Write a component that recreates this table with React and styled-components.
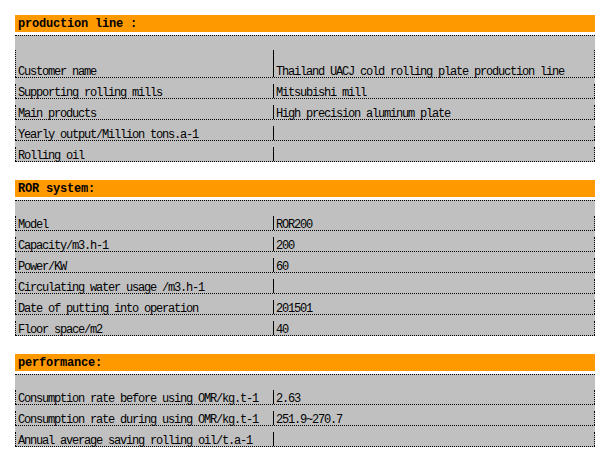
import styled, { createGlobalStyle } from "styled-components"

const sections = [
    {
        title: "production line :",
        first: { height: 42, edge: 27 },
        rows: [
            ["Customer name", "Thailand UACJ cold rolling plate production line"],
            ["Supporting rolling mills", "Mitsubishi mill"],
            ["Main products", "High precision aluminum plate"],
            ["Yearly output/Million tons.a-1", ""],
            ["Rolling oil", ""],
        ],
    },
    {
        title: "ROR system:",
        first: { height: 30, edge: 14 },
        rows: [
            ["Model", "ROR200"],
            ["Capacity/m3.h-1", "200"],
            ["Power/KW", "60"],
            ["Circulating water usage /m3.h-1", ""],
            ["Date of putting into operation", "201501"],
            ["Floor space/m2", "40"],
        ],
    },
    {
        title: "performance:",
        first: { height: 30, edge: 14 },
        rows: [
            ["Consumption rate before using OMR/kg.t-1", "2.63"],
            ["Consumption rate during using OMR/kg.t-1", "251.9~270.7"],
            ["Annual average saving rolling oil/t.a-1", ""],
        ],
    },
]

export default function App() {
    return (
        <>
            <GlobalStyle />
            <Page>
                {sections.map((section) => (
                    <Section key={section.title}>
                        <Header>{section.title}</Header>
                        <Body>
                            {section.rows.map(([label, value], i) => {
                                const size = i === 0 ? section.first : { height: 21, edge: 14 }
                                return (
                                    <Row key={label} $height={size.height}>
                                        <Cell>
                                            <Label $edge={size.edge}>{label}</Label>
                                        </Cell>
                                        <Cell>
                                            <Value $edge={size.edge}>{value}</Value>
                                        </Cell>
                                    </Row>
                                )
                            })}
                        </Body>
                    </Section>
                ))}
            </Page>
        </>
    )
}

const GlobalStyle = createGlobalStyle`
    body {
        margin: 0;
        background: #fff;
        font-family: "Liberation Mono", "DejaVu Sans Mono", monospace;
        color: #000;
    }
`

const Page = styled.div`
    width: 580px;
    padding: 15px 0 0 15px;
`

const Section = styled.section`
    margin-bottom: 18px;
`

const Header = styled.div`
    height: 17px;
    line-height: 18px;
    background-color: #FF9900;
    font-size: 12px;
    font-weight: bold;
    letter-spacing: -0.2px;
    padding-left: 3px;
    margin-bottom: 3px;
`

const Body = styled.div`
    background-color: #C0C0C0;
    border-top: 1px dotted #000;
`

const Row = styled.div`
    display: grid;
    grid-template-columns: 258px 322px;
    height: ${(p) => p.$height}px;
    box-sizing: border-box;
    border-bottom: 1px dotted #000;
`

const Cell = styled.div`
    display: flex;
    align-items: flex-end;
`

const Label = styled.div`
    flex: 1;
    display: flex;
    align-items: flex-end;
    height: ${(p) => p.$edge}px;
    border-left: 1px dotted #000;
    padding-left: 2px;
    font-size: 12px;
    letter-spacing: -1.2px;
    line-height: 10px;
    white-space: nowrap;
`

const Value = styled(Label)`
    border-left: 1px solid #000;
    border-right: 1px dotted #000;
`
